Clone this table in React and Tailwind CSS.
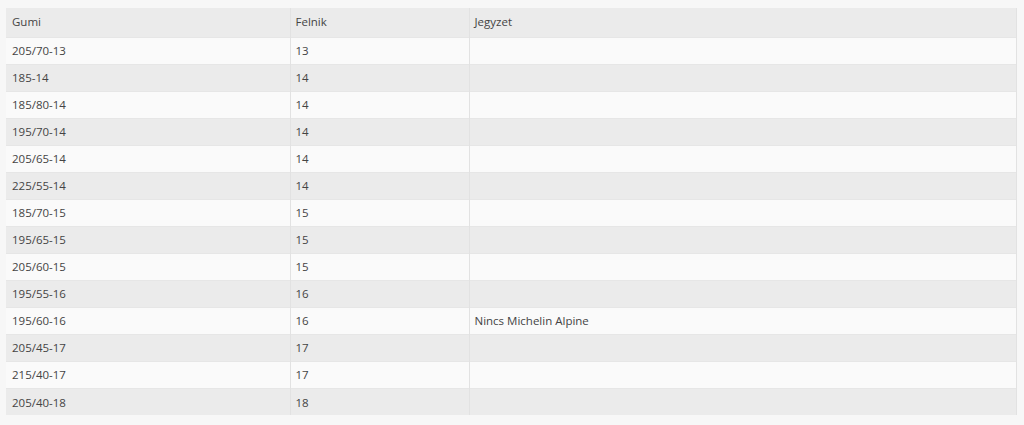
const rows = [
  ["205/70-13", "13", ""],
  ["185-14", "14", ""],
  ["185/80-14", "14", ""],
  ["195/70-14", "14", ""],
  ["205/65-14", "14", ""],
  ["225/55-14", "14", ""],
  ["185/70-15", "15", ""],
  ["195/65-15", "15", ""],
  ["205/60-15", "15", ""],
  ["195/55-16", "16", ""],
  ["195/60-16", "16", "Nincs Michelin Alpine"],
  ["205/45-17", "17", ""],
  ["215/40-17", "17", ""],
  ["205/40-18", "18", ""],
];

export default function App() {
  return (
    <div className="w-[1024px] h-[425px] bg-[#f7f7f7] pt-[8px] pl-[6px] font-['Open_Sans',sans-serif] text-[11.5px] text-[#444]">
      <table className="w-[1011px] border-collapse table-fixed">
        <colgroup>
          <col className="w-[284px]" />
          <col className="w-[179px]" />
          <col />
        </colgroup>
        <thead>
          {/* header */}
          <tr className="bg-[#ebebeb] h-[29px]">
            <th className="text-left font-normal pl-[6px] pb-[1px] border-r border-[#e2e2e2]">Gumi</th>
            <th className="text-left font-normal pl-[5px] pb-[1px] border-r border-[#e2e2e2]">Felnik</th>
            <th className="text-left font-normal pl-[5px] pb-[1px] border-r border-[#e2e2e2]">Jegyzet</th>
          </tr>
        </thead>
        <tbody>
          {rows.map((r, i) => (
            <tr
              key={i}
              className={`h-[27px] border-t border-[#e6e6e6] ${i % 2 === 0 ? "bg-[#fafafa]" : "bg-[#ebebeb]"}`}
            >
              <td className="pl-[6px] pt-[1px] border-r border-[#e2e2e2]">{r[0]}</td>
              <td className="pl-[5px] pt-[1px] border-r border-[#e2e2e2]">{r[1]}</td>
              <td className="pl-[5px] pt-[1px] border-r border-[#e2e2e2]">{r[2]}</td>
            </tr>
          ))}
        </tbody>
      </table>
    </div>
  );
}
